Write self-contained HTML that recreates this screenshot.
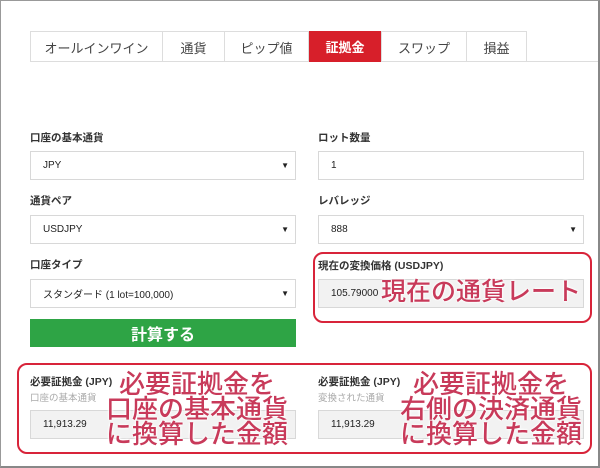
<!DOCTYPE html>
<html><head><meta charset="utf-8"><style>
*{margin:0;padding:0;box-sizing:border-box}
body{width:600px;height:468px;background:#fff;position:relative;overflow:hidden;font-family:"Liberation Sans","Noto Sans CJK JP",sans-serif;color:#222}
.frame{position:absolute;left:0;top:0;width:600px;height:468px;border:1px solid #999;border-right:2px solid #888;border-bottom:2px solid #888}
.a{position:absolute}
.tabs{left:30px;top:31px;height:31px;border-bottom:1px solid #ddd;width:568px}
.tab{position:absolute;top:0;height:31px;border-left:1px solid #ddd;font-size:13px;color:#444;display:flex;align-items:center;justify-content:center}
.lbl{font-size:10.5px;font-weight:bold;color:#333}
.box{border:1px solid #d8d8d8;background:#fff;font-size:10px;padding-left:12px;display:flex;align-items:center}
.box.g{background:#f2f2f2}
.arr{position:absolute;right:6px;font-size:8px}
.sub{font-size:9.5px;color:#aaa}
.red{border:2px solid #d8243a;border-radius:10px}
.big{color:#c83a5a;font-size:26px;font-weight:500;line-height:25px;text-align:center;text-shadow:0 0 2px #fff,0 0 2px #fff,0 0 3px #fff;white-space:nowrap}
</style></head><body>
<div class="a tabs">
<div class="tab" style="left:0;width:132px;border-top:1px solid #ddd">オールインワイン</div>
<div class="tab" style="left:132px;width:62px;border-top:1px solid #ddd">通貨</div>
<div class="tab" style="left:194px;width:84px;border-top:1px solid #ddd">ピップ値</div>
<div class="tab" style="left:278px;width:73px;background:#d71f2a;color:#fff;font-weight:bold">証拠金</div>
<div class="tab" style="left:351px;width:85px;border-top:1px solid #ddd">スワップ</div>
<div class="tab" style="left:436px;width:61px;border-top:1px solid #ddd;border-right:1px solid #ddd">損益</div>
</div>
<div class="a lbl" style="left:30px;top:130px">口座の基本通貨</div>
<div class="a lbl" style="left:318px;top:130px">ロット数量</div>
<div class="a box" style="left:30px;top:151px;width:266px;height:29px">JPY<span class="arr">▼</span></div>
<div class="a box" style="left:318px;top:151px;width:266px;height:29px">1</div>
<div class="a lbl" style="left:30px;top:193px">通貨ペア</div>
<div class="a lbl" style="left:318px;top:193px">レバレッジ</div>
<div class="a box" style="left:30px;top:215px;width:266px;height:29px">USDJPY<span class="arr">▼</span></div>
<div class="a box" style="left:318px;top:215px;width:266px;height:29px">888<span class="arr">▼</span></div>
<div class="a lbl" style="left:30px;top:257px">口座タイプ</div>
<div class="a box" style="left:30px;top:279px;width:266px;height:29px">スタンダード (1 lot=100,000)<span class="arr">▼</span></div>
<div class="a" style="left:30px;top:319px;width:266px;height:28px;background:#2ea445;color:#fff;font-weight:bold;font-size:16px;display:flex;align-items:center;justify-content:center">計算する</div>
<div class="a red" style="left:313px;top:252px;width:279px;height:71px"></div>
<div class="a lbl" style="left:318px;top:258px">現在の変換価格 (USDJPY)</div>
<div class="a box g" style="left:318px;top:279px;width:266px;height:29px">105.79000</div>
<div class="a big" style="left:378px;top:280px;width:206px;font-size:25px">現在の通貨レート</div>
<div class="a red" style="left:17px;top:363px;width:575px;height:91px"></div>
<div class="a lbl" style="left:30px;top:374px">必要証拠金 (JPY)</div>
<div class="a sub" style="left:30px;top:390px">口座の基本通貨</div>
<div class="a box g" style="left:30px;top:410px;width:266px;height:29px">11,913.29</div>
<div class="a lbl" style="left:318px;top:374px">必要証拠金 (JPY)</div>
<div class="a sub" style="left:318px;top:390px">変換された通貨</div>
<div class="a box g" style="left:318px;top:410px;width:266px;height:29px">11,913.29</div>
<div class="a big" style="left:100px;top:372px;width:194px">必要証拠金を<br>口座の基本通貨<br>に換算した金額</div>
<div class="a big" style="left:394px;top:372px;width:194px">必要証拠金を<br>右側の決済通貨<br>に換算した金額</div>
<div class="frame"></div>
</body></html>
